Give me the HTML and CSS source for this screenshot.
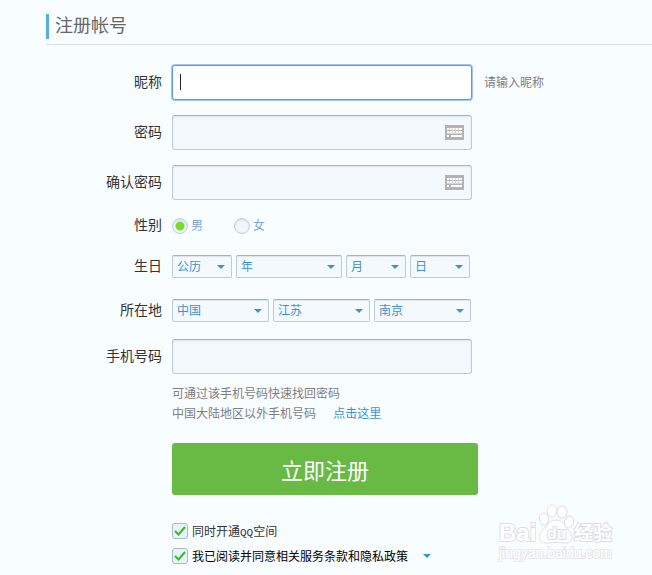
FILE: index.html
```html
<!DOCTYPE html>
<html lang="zh-CN">
<head>
    <meta charset="UTF-8">
    <meta name="viewport" content="width=device-width, initial-scale=1.0">
    <title>注册帐号</title>
    <link rel="stylesheet" href="styles.css">
</head>
<body>
    <svg class="symbols" width="0" height="0">
        <symbol id="keyboard" viewBox="0 0 19 15">
            <path fill="#b3b3b3" d="M0 0h19v15H0z"/>
            <path fill="#fff" d="M2 3h15v2H2zM2 6h15v2H2zM2 10h2v2H2zM6 10h11v2H6z"/>
            <path fill="#d4d4d4" d="M4 3h1v2H4zM7 3h1v5H7zM10 3h1v5h-1zM13 3h1v5h-1zM4 6h1v2H4zM2 8h15v1H2z"/>
        </symbol>
    </svg>

    <main>
        <header>
            <h1>注册帐号</h1>
        </header>

        <form>
            <div class="row">
                <label class="name" for="nick">昵称</label>
                <div class="field">
                    <input class="text focused" type="text" id="nick">
                    <span class="caret"></span>
                </div>
                <span class="hint">请输入昵称</span>
            </div>
            <div class="row">
                <label class="name" for="password">密码</label>
                <div class="field">
                    <input class="text" type="password" id="password">
                    <svg class="keyboard"><use href="#keyboard"/></svg>
                </div>
            </div>
            <div class="row">
                <label class="name" for="password2">确认密码</label>
                <div class="field">
                    <input class="text" type="password" id="password2">
                    <svg class="keyboard"><use href="#keyboard"/></svg>
                </div>
            </div>
            <div class="row gender">
                <span class="name">性别</span>
                <label class="radio"><input type="radio" name="gender" checked>男</label>
                <label class="radio"><input type="radio" name="gender">女</label>
            </div>
            <div class="row birthday">
                <span class="name">生日</span>
                <div class="selects">
                    <div class="select"><select aria-label="历法"><option>公历</option></select></div>
                    <div class="select year"><select aria-label="年"><option>年</option></select></div>
                    <div class="select"><select aria-label="月"><option>月</option></select></div>
                    <div class="select"><select aria-label="日"><option>日</option></select></div>
                </div>
            </div>
            <div class="row location">
                <span class="name">所在地</span>
                <div class="selects">
                    <div class="select"><select aria-label="国家"><option>中国</option></select></div>
                    <div class="select"><select aria-label="省份"><option>江苏</option></select></div>
                    <div class="select"><select aria-label="城市"><option>南京</option></select></div>
                </div>
            </div>
            <div class="row phone">
                <label class="name" for="phone">手机号码</label>
                <div class="field">
                    <input class="text" type="text" id="phone">
                </div>
            </div>

            <div class="bottom">
                <p>可通过该手机号码快速找回密码</p>
                <p>中国大陆地区以外手机号码 <a href="#">点击这里</a></p>
                <button type="submit">立即注册</button>
                <label class="check">
                    <input type="checkbox" checked>
                    <svg viewBox="0 0 16 16"><path d="M3 8l3.500 3.500L13 4"/></svg>
                    <span>同时开通<span class="latin">QQ</span>空间</span>
                </label>
                <label class="check agree">
                    <input type="checkbox" checked>
                    <svg viewBox="0 0 16 16"><path d="M3 8l3.500 3.500L13 4"/></svg>
                    <span>我已阅读并同意相关服务条款和隐私政策</span>
                    <i class="arrow"></i>
                </label>
            </div>
        </form>
    </main>

    <svg class="watermark" viewBox="0 0 120 60">
        <g class="mark">
            <text class="bai" x="1" y="36">Bai</text>
            <ellipse cx="46" cy="14" rx="4.500" ry="6" transform="rotate(-12 46 14)"/>
            <ellipse cx="54" cy="6" rx="5" ry="6"/>
            <ellipse cx="64" cy="7" rx="5" ry="6" transform="rotate(8 64 7)"/>
            <ellipse cx="71" cy="17" rx="4.500" ry="6" transform="rotate(14 71 17)"/>
            <path d="M58 15c7 0 9 7 12 10 7 7 4 14-4 13-6-1-10-1-15 0-9 1-13-6-6-13 4-4 6-10 13-10z"/>
            <text class="du" x="49" y="34">du</text>
            <text class="cn" x="76" y="35">经验</text>
        </g>
        <text class="site" x="1" y="53">jingyan.baidu.com</text>
    </svg>
</body>
</html>
```
FILE: styles.css
```css
body {
    margin: 0;
    background-color: #f8fdff;
    color: #333;
    font-family: "Liberation Sans", "Noto Sans CJK SC", sans-serif;
    font-size: 12px;
    line-height: 20px;
}

main {
    padding: 14px 0 10px 46px;
}

header {
    padding-bottom: 5px;
    border-bottom: 1px solid #dcdfe0;
}

h1 {
    margin: 0;
    padding-left: 6px;
    border-left: 3px solid #56ade2;
    color: #666;
    font-size: 18px;
    font-weight: normal;
    line-height: 25px;
}

form {
    padding-top: 20px;
}

.symbols {
    position: absolute;
}

.row {
    display: flex;
    align-items: center;
    margin-bottom: 15px;
}

.name {
    width: 116px;
    margin-right: 10px;
    padding-bottom: 2px;
    font-size: 14px;
    text-align: right;
}

.field {
    position: relative;
    width: 300px;
}

.text {
    display: block;
    box-sizing: border-box;
    width: 100%;
    height: 35px;
    padding: 0 8px;
    border: 1px solid #bccdd7;
    border-top-color: #a3b4c4;
    border-radius: 3px;
    background-color: #f4f9fe;
    box-shadow: inset 0 1px 2px #dbe3ed;
    font-size: 14px;
    outline: none;
}

.focused {
    border-color: #5b98ee;
    background-color: #fff;
    box-shadow: 0 0 0 1px #a2c5f7;
    caret-color: transparent;
}

.caret {
    position: absolute;
    left: 8px;
    top: 9px;
    width: 1px;
    height: 16px;
    background-color: #222;
}

.keyboard {
    position: absolute;
    right: 8px;
    top: 10px;
    width: 19px;
    height: 15px;
}

.hint {
    margin-left: 12px;
    color: #808080;
}

.gender {
    height: 22px;
    margin-bottom: 18px;
}

.radio {
    display: flex;
    align-items: center;
    gap: 3px;
    width: 62px;
    color: #7fa6cf;
}

.radio input {
    appearance: none;
    box-sizing: border-box;
    width: 16px;
    height: 16px;
    margin: 0;
    border: 1px solid #c2d0dc;
    border-radius: 50%;
    background-color: #f1f6fc;
    box-shadow: inset 0 1px 2px #cfdae5;
}

.radio input:checked {
    background-image: radial-gradient(circle, #77dc26 4px, transparent 5px);
}

.birthday {
    height: 23px;
    margin-bottom: 21px;
}

.location {
    height: 23px;
    margin-bottom: 17px;
}

.selects {
    display: flex;
    gap: 4px;
}

.select {
    position: relative;
    width: 60px;
}

.year {
    width: 106px;
}

.location .select {
    width: 97px;
}

.select select {
    appearance: none;
    display: block;
    box-sizing: border-box;
    width: 100%;
    height: 23px;
    padding: 0 4px;
    border: 1px solid #bccdd7;
    border-top-color: #a3b4c4;
    border-radius: 2px;
    background-color: #f4f9fe;
    box-shadow: inset 0 1px 1px #dbe3ed;
    color: #3b93d3;
    font-family: inherit;
    font-size: 12px;
}

.select::after,
.arrow {
    border: 4px solid transparent;
    border-top-color: #3d94c7;
    border-bottom: 0;
}

.select::after {
    content: "";
    position: absolute;
    right: 7px;
    top: 10px;
    pointer-events: none;
}

.phone {
    margin-bottom: 10px;
}

.bottom {
    padding-left: 126px;
    color: #808080;
}

p {
    margin: 0;
}

a {
    margin-left: 14px;
    color: #3b93d3;
    text-decoration: none;
}

button {
    display: block;
    width: 306px;
    height: 52px;
    margin: 19px 0 26px;
    padding: 0;
    border: none;
    border-radius: 3px;
    background-color: #69ba45;
    color: white;
    cursor: pointer;
    font-family: inherit;
    font-size: 22px;
}

.check {
    display: flex;
    align-items: center;
    position: relative;
    height: 20px;
    margin-bottom: 5px;
    color: #333;
}

.check > span {
    padding-top: 2px;
}

.check input {
    appearance: none;
    box-sizing: border-box;
    width: 16px;
    height: 16px;
    margin: 0 4px 0 0;
    border: 1px solid #a9bac8;
    border-radius: 3px;
    background-color: #e9f2fa;
}

.check svg {
    position: absolute;
    left: 0;
    top: 2px;
    width: 16px;
    height: 16px;
    fill: none;
    stroke: none;
    stroke-width: 2;
    pointer-events: none;
}

.check input:checked + svg {
    stroke: #31bd25;
}

.latin {
    font-family: "Liberation Mono", monospace;
    font-size: 11px;
}

.agree {
    color: #000;
}

.arrow {
    margin-left: 15px;
}

.watermark {
    position: absolute;
    left: 498px;
    top: 505px;
    width: 120px;
    height: 60px;
    overflow: visible;
    fill: #fff;
    stroke: #dedfe2;
    stroke-width: 1;
    pointer-events: none;
}

.mark text {
    font-weight: bold;
    paint-order: stroke;
    stroke-width: 2;
}

.bai {
    font-size: 24px;
}

.mark .du {
    font-size: 16px;
    fill: #f8fdff;
}

.cn {
    font-size: 19px;
}

.site {
    font-size: 14px;
    paint-order: stroke;
    stroke: #e6e9eb;
    stroke-width: 2;
}
```
